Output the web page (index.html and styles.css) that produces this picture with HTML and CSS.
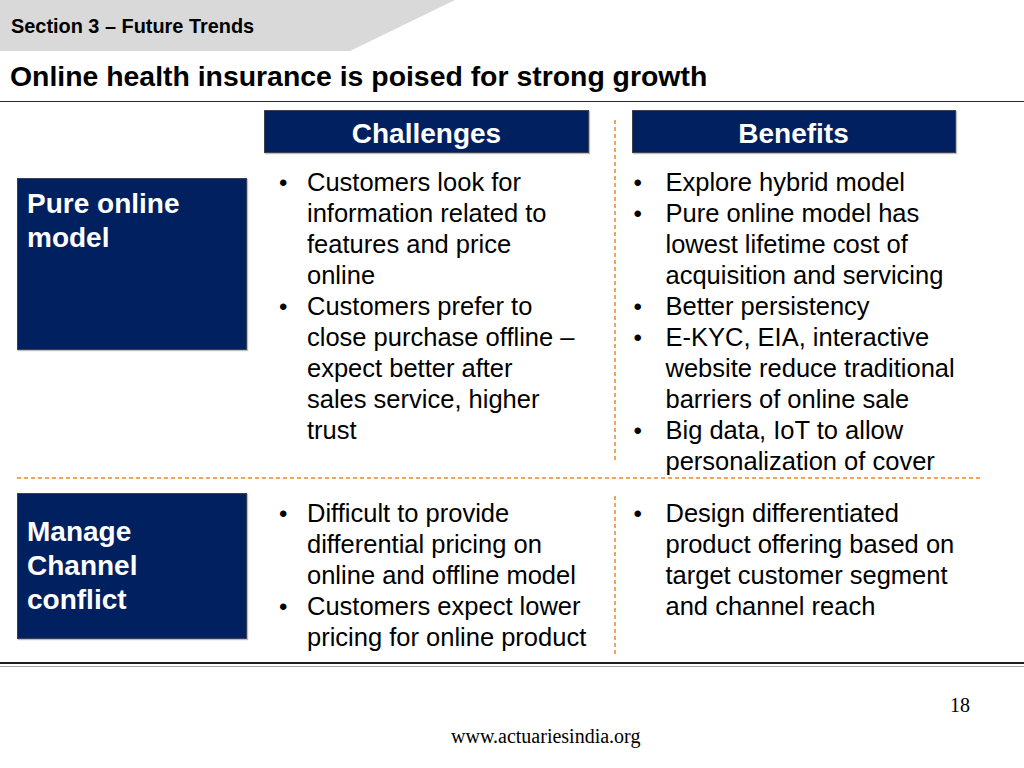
FILE: index.html
```html
<!DOCTYPE html>
<html lang="en">
<head>
<meta charset="utf-8">
<title>Online health insurance is poised for strong growth</title>
<link rel="stylesheet" href="styles.css">
</head>
<body>
<div class="slide">
  <div class="tab">Section 3 – Future Trends</div>
  <h1 class="title">Online health insurance is poised for strong growth</h1>

  <div class="board">
    <div class="row row-top">
      <div class="label-col">
        <div class="label label-top">Pure online<br>model</div>
      </div>
      <div class="col col-ch">
        <div class="head">Challenges</div>
        <ul class="list list-ch">
          <li>Customers look for<br>information related to<br>features and price<br>online</li>
          <li>Customers prefer to<br>close purchase offline –<br>expect better after<br>sales service, higher<br>trust</li>
        </ul>
      </div>
      <div class="vdash vdash-top"></div>
      <div class="col col-be">
        <div class="head">Benefits</div>
        <ul class="list list-be">
          <li>Explore hybrid model</li>
          <li>Pure online model has<br>lowest lifetime cost of<br>acquisition and servicing</li>
          <li>Better persistency</li>
          <li>E-KYC, EIA, interactive<br>website reduce traditional<br>barriers of online sale</li>
          <li>Big data, IoT to allow<br>personalization of cover</li>
        </ul>
      </div>
    </div>

    <div class="hdash"></div>

    <div class="row row-bottom">
      <div class="label-col">
        <div class="label label-bottom">Manage<br>Channel<br>conflict</div>
      </div>
      <div class="col col-ch">
        <ul class="list list-ch">
          <li>Difficult to provide<br>differential pricing on<br>online and offline model</li>
          <li>Customers expect lower<br>pricing for online product</li>
        </ul>
      </div>
      <div class="vdash vdash-bottom"></div>
      <div class="col col-be">
        <ul class="list list-be">
          <li>Design differentiated<br>product offering based on<br>target customer segment<br>and channel reach</li>
        </ul>
      </div>
    </div>
  </div>

  <div class="double-rule"></div>

  <footer class="footer">
    <div class="page-num">18</div>
    <div class="site">www.actuariesindia.org</div>
  </footer>
</div>
</body>
</html>
```

FILE: styles.css
```css
*, *::before, *::after {
  box-sizing: border-box;
}

html, body {
  margin: 0;
  padding: 0;
  background: #ffffff;
}

body {
  font-family: "Liberation Sans", Arial, Helvetica, sans-serif;
  color: #000000;
}

.slide {
  width: 1024px;
  height: 768px;
  overflow: hidden;
}

.tab {
  width: 455px;
  height: 51px;
  background: #d9d9d9;
  clip-path: polygon(0 0, 100% 0, 350px 100%, 0 100%);
  display: flex;
  align-items: center;
  padding-left: 11px;
  padding-top: 1px;
  font-weight: bold;
  font-size: 19.9px;
}

.title {
  margin: 0;
  height: 51px;
  display: flex;
  align-items: center;
  padding-left: 10px;
  padding-top: 1px;
  font-size: 28.4px;
  font-weight: bold;
  border-bottom: 1.5px solid #2b2b2b;
}

.board {
  padding-top: 8px;
}

.row {
  display: flex;
  align-items: flex-start;
}

.row-top {
  height: 367px;
}

.row-bottom {
  height: 183px;
}

.label-col {
  margin-left: 17px;
  width: 230px;
}

.label {
  background: #002060;
  color: #ffffff;
  font-weight: bold;
  font-size: 28px;
  line-height: 34px;
  padding-left: 9px;
  border: 1px solid #3d3f55;
  box-shadow: 1px 1px 1px rgba(0, 0, 0, 0.25);
}

.label-top {
  margin-top: 68px;
  height: 172px;
  padding-top: 8px;
}

.label-bottom {
  margin-top: 14px;
  height: 146px;
  display: flex;
  align-items: center;
}

.col-ch {
  margin-left: 17px;
  width: 325px;
}

.col-be {
  margin-left: 16px;
  width: 324px;
}

.head {
  height: 43px;
  background: #002060;
  color: #ffffff;
  font-weight: bold;
  font-size: 28px;
  display: flex;
  align-items: center;
  justify-content: center;
  padding-top: 4px;
  border: 1px solid #3d3f55;
  box-shadow: 1px 1px 1px rgba(0, 0, 0, 0.25);
  margin-bottom: 14px;
}

.vdash {
  margin-left: 25px;
  width: 1.5px;
  flex: none;
  background: repeating-linear-gradient(180deg, #f3a35e 0 4px, transparent 4px 7px);
}

.vdash-top {
  margin-top: 10px;
  height: 340px;
}

.vdash-bottom {
  margin-top: 17px;
  height: 160px;
}

.hdash {
  margin-left: 17px;
  width: 963px;
  height: 1.5px;
  background: repeating-linear-gradient(90deg, #f3a35e 0 4px, transparent 4px 7px);
}

.row-bottom .list {
  margin-top: 19px;
}

.list {
  list-style: none;
  margin: 0;
  padding: 0;
  font-size: 25.5px;
  line-height: 31px;
}

.list li {
  display: flex;
  white-space: nowrap;
}

.list li::before {
  content: "•";
  flex: none;
  font-size: 24px;
}

.list-ch li::before {
  width: 43px;
  padding-left: 15px;
}

.list-be li::before {
  width: 34px;
  padding-left: 2px;
}

.double-rule {
  height: 5px;
  border-top: 2px solid #1e1e1e;
  border-bottom: 1px solid #a6a6a6;
}

.footer {
  font-family: "Liberation Serif", "Times New Roman", serif;
  font-size: 20px;
  line-height: 23px;
}

.page-num {
  margin-top: 27px;
  text-align: right;
  padding-right: 54px;
}

.site {
  margin-top: 8px;
  padding-left: 451px;
}
```
